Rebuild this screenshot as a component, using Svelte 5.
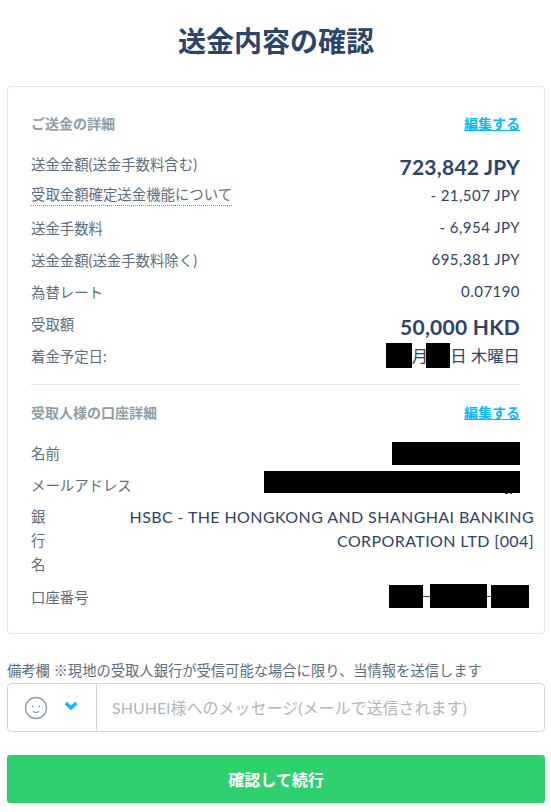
<script lang="ts">
  const sendRows = [
    { label: '送金金額(送金手数料含む)', value: '723,842 JPY', big: true },
    { label: '受取金額確定送金機能について', value: '- 21,507 JPY', dotted: true },
    { label: '送金手数料', value: '- 6,954 JPY' },
    { label: '送金金額(送金手数料除く)', value: '695,381 JPY' },
    { label: '為替レート', value: '0.07190' },
    { label: '受取額', value: '50,000 HKD', big: true },
  ];
</script>

<main class="page">
  <h1>送金内容の確認</h1>

  <section class="card">
    <div class="head">
      <h2>ご送金の詳細</h2>
      <a href="#edit">編集する</a>
    </div>

    {#each sendRows as row}
      <div class="row">
        <span class="label" class:dotted={row.dotted}>{row.label}</span>
        <span class="value" class:big={row.big}>{row.value}</span>
      </div>
    {/each}
    <div class="row">
      <span class="label">着金予定日:</span>
      <span class="value date"><i class="mask m-month"></i>月<i class="mask m-day"></i>日 木曜日</span>
    </div>

    <hr />

    <div class="head second">
      <h2>受取人様の口座詳細</h2>
      <a href="#edit">編集する</a>
    </div>

    <div class="row">
      <span class="label">名前</span>
      <i class="mask m-name"></i>
    </div>
    <div class="row">
      <span class="label">メールアドレス</span>
      <i class="mask m-mail"></i>
    </div>
    <div class="row bank">
      <span class="label">銀行名</span>
      <span class="value">HSBC - THE HONGKONG AND SHANGHAI BANKING CORPORATION LTD [004]</span>
    </div>
    <div class="row">
      <span class="label">口座番号</span>
      <span class="account"><i class="mask m-a1"></i><i class="mask m-a2"></i><i class="mask m-a3"></i></span>
    </div>
  </section>

  <p class="note">備考欄 ※現地の受取人銀行が受信可能な場合に限り、当情報を送信します</p>
  <div class="message">
    <div class="emoji">
      <svg width="24" height="24" viewBox="0 0 24 24" fill="none">
        <circle cx="12" cy="12" r="10.500" stroke="#8f9bb3" stroke-width="1.3" />
        <circle cx="8.500" cy="10.500" r="1" fill="#8f9bb3" />
        <circle cx="15.500" cy="10.500" r="1" fill="#8f9bb3" />
        <path d="M9.500 15.500c1.500 1.300 3.500 1.300 5 0" stroke="#8f9bb3" stroke-width="1.300" stroke-linecap="round" />
      </svg>
      <svg class="chev" width="14" height="10" viewBox="0 0 14 10" fill="none">
        <path d="M1.800 2L7 7l5.200-5" stroke="#00b9ff" stroke-width="3.200" />
      </svg>
    </div>
    <span class="placeholder">SHUHEI様へのメッセージ(メールで送信されます)</span>
  </div>

  <button type="button" class="submit">確認して続行</button>
</main>

<style>
  :global(body) {
    margin: 0;
    background: #fff;
  }
  .page {
    box-sizing: border-box;
    width: 551px;
    height: 812px;
    overflow: hidden;
    padding: 0 6px 0 7px;
    font-family: Lato, "Noto Sans CJK JP", sans-serif;
    font-size: 14.4px;
    color: #2e4369;
  }
  h1 {
    margin: 0;
    padding-top: 23px;
    height: 86px;
    box-sizing: border-box;
    font-size: 28px;
    line-height: 36px;
    font-weight: 700;
    text-align: center;
    color: #2e4369;
  }
  .card {
    box-sizing: border-box;
    height: 548px;
    padding: 23px 24px 0 23px;
    border: 1px solid #e6e8ea;
    border-radius: 4px;
  }
  .head {
    display: flex;
    justify-content: space-between;
    align-items: center;
    height: 26px;
    margin-bottom: 11px;
  }
  h2 {
    margin: 0;
    font-size: 14px;
    font-weight: 700;
    color: #8c9ea8;
  }
  .head a {
    font-size: 14px;
    font-weight: 700;
    color: #00b9ff;
  }
  .row {
    display: flex;
    justify-content: space-between;
    align-items: center;
    height: 32px;
    color: #5d6d7e;
  }
  .label {
    flex: none;
  }
  .dotted {
    line-height: 20px;
    border-bottom: 1px dotted #00b9ff;
  }
  .value {
    font-size: 15px;
    letter-spacing: 0.45px;
    color: #2e4369;
  }
  .big {
    margin-top: 7px;
    font-size: 21px;
    font-weight: 700;
    letter-spacing: 0.25px;
  }
  .date {
    display: flex;
    align-items: center;
    font-size: 16.4px;
    letter-spacing: 0;
  }
  .mask {
    display: block;
    background: #000;
  }
  .m-month {
    width: 26px;
    height: 25px;
  }
  .m-day {
    width: 24px;
    height: 25px;
    margin-left: -2px;
  }
  .m-name {
    width: 128px;
    height: 23px;
    margin-top: 2px;
  }
  .m-mail {
    position: relative;
    width: 256px;
    height: 22px;
    margin-bottom: 5px;
  }
  /* descender left showing under the mask */
  .m-mail::after {
    content: "";
    position: absolute;
    right: 8px;
    bottom: -1px;
    width: 7px;
    height: 1px;
    background: linear-gradient(90deg, #2e4369 40%, transparent 40% 65%, #2e4369 65%);
  }
  .account {
    display: flex;
    align-items: center;
    margin-right: -9px;
    background: linear-gradient(#2e4369, #2e4369) center / 100% 1px no-repeat;
  }
  .m-a1 {
    width: 34px;
    height: 23px;
  }
  .m-a2 {
    width: 57px;
    height: 24px;
    margin-left: 7px;
  }
  .m-a3 {
    width: 38px;
    height: 23px;
    margin-left: 4px;
  }
  hr {
    margin: 13px 0 14px;
    border: 0;
    border-top: 1px solid #e6e8ea;
  }
  .bank {
    align-items: flex-start;
    box-sizing: border-box;
    height: 80px;
    padding-top: 5px;
    line-height: 24px;
  }
  .bank .label {
    width: 15px;
    word-break: break-all;
  }
  .bank .value {
    width: 420px;
    margin-right: -14px;
    font-size: 16px;
    letter-spacing: 0.4px;
    text-align: right;
  }
  .note {
    margin: 24px 0 0;
    height: 25px;
    line-height: 26px;
    font-size: 14.3px;
    color: #5d6d7e;
  }
  .message {
    display: flex;
    box-sizing: border-box;
    height: 49px;
    border: 1px solid #d3d6d9;
    border-radius: 4px;
  }
  .emoji {
    display: flex;
    align-items: center;
    gap: 16px;
    box-sizing: border-box;
    width: 89px;
    padding-left: 16px;
    border-right: 1px solid #d3d6d9;
  }
  .chev {
    margin-top: -4px;
  }
  .placeholder {
    align-self: center;
    padding: 0 0 2px 15px;
    font-size: 16px;
    color: #b3b6b9;
  }
  .submit {
    display: block;
    width: 100%;
    height: 48px;
    margin-top: 23px;
    border: 0;
    border-radius: 3px;
    background: #2ed06e;
    color: #fff;
    font: inherit;
    font-size: 16px;
    font-weight: 700;
  }
</style>
